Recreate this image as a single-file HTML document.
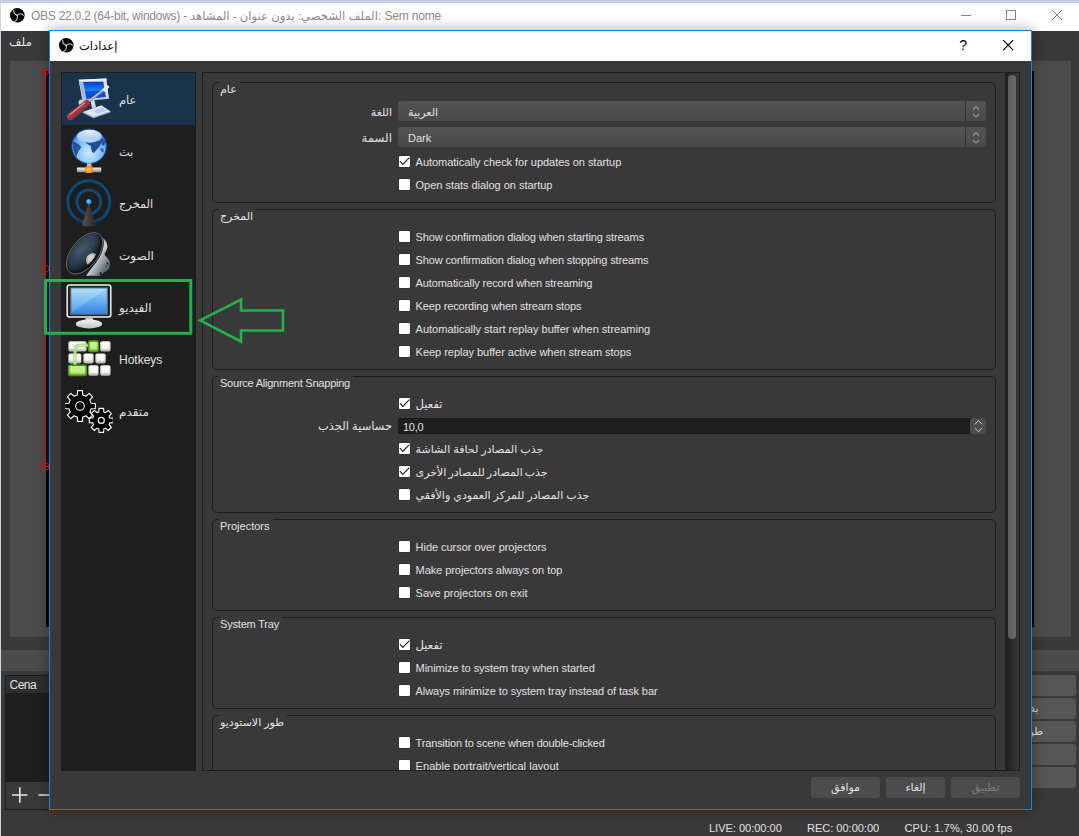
<!DOCTYPE html>
<html lang="ar">
<head>
<meta charset="utf-8">
<title>OBS</title>
<style>
*{box-sizing:border-box;margin:0;padding:0}
html,body{width:1079px;height:836px;overflow:hidden}
body{position:relative;background:#3a393a;font-family:"Liberation Sans","DejaVu Sans",sans-serif;font-size:11px;color:#e1e0e1;line-height:14px}
.a{position:absolute}
.t{position:absolute;white-space:nowrap;line-height:14px;height:14px}
#topstrip{left:0;top:0;width:1079px;height:3px;background:#c4cde1}
#leftstrip{left:0;top:3px;width:1px;height:833px;background:#cdd5e8}
#mtitle{left:1px;top:3px;width:1078px;height:28px;background:#fff}
#mtxt{left:31px;top:7px;font-size:12px;line-height:18px;height:18px;color:#8b8b8b;direction:ltr;white-space:nowrap}
#preview{left:10px;top:61px;width:1061px;height:576px;background:#4c4c4c}
#canvas{left:46px;top:71px;width:988px;height:556px;background:#000}
.dockt{top:650px;height:21px;background:#4b4b4b}
.btn{position:absolute;background:#4c4c4c;border-radius:3px;text-align:center;white-space:nowrap}
#dlg{left:49px;top:30px;width:983px;height:780px;border:1px solid #1883d7;background:#3a393a;box-shadow:0 0 13px 0 rgba(0,0,0,.36)}
#dtitle{left:50px;top:31px;width:981px;height:30px;background:#fff}
#dtxt{left:79px;top:37px;font-size:11.5px;line-height:18px;height:18px;color:#000;white-space:nowrap}
#side{left:61px;top:72px;width:135px;height:699px;background:#1f1e1f}
#sel{left:62px;top:73px;width:133px;height:52px;background:#19334b}
.sl{position:absolute;font-size:12px;left:119px;line-height:16px;height:16px;white-space:nowrap}
#scroll{left:202px;top:72px;width:818px;height:699px;border:1px solid #1f1e1f;overflow:hidden}
.gb{position:absolute;left:9px;width:784px;border:1px solid #1f1e1f;border-radius:5px}
.gt{position:absolute;left:16px;height:12px;background:#3a393a;padding:0 3px 0 1px;line-height:14px;white-space:nowrap}
.cb{position:absolute;left:196.4px;width:10.8px;height:10.8px;margin-top:.4px;background:#fff;border-radius:1px;box-shadow:0 0 0 .4px #2a2a2a}
.cl{position:absolute;left:212.6px;white-space:nowrap;line-height:14px;height:14px}
.fl{position:absolute;right:627px;white-space:nowrap;line-height:14px;height:14px}
.combo{position:absolute;left:195px;width:588px;height:20px;border-radius:3px;background:linear-gradient(#535353,#494949)}
.combo i{position:absolute;right:20px;top:0;width:1px;height:20px;background:#343334}
.combo span{position:absolute;left:10px;top:4px;line-height:14px;white-space:nowrap}
svg{position:absolute;overflow:visible}
#mt1{letter-spacing:-.25px}#mt2{font-size:11.6px}#mt3{letter-spacing:-.2px}
</style>
</head>
<body>
<div class="a" id="topstrip"></div>
<div class="a" id="mtitle"></div>
<svg class="a" style="left:9.6px;top:7.6px" width="14.6" height="14.6" viewBox="0 0 14.6 14.6"><circle cx="7.3" cy="7.3" r="7.3" fill="#000"/><g fill="none" stroke="#d6d6d6" stroke-width="1.05" stroke-linecap="round"><path d="M7.3 7.5C6 6.6 4.2 6 3.9 4.4C3.7 3.6 3.7 3 3.8 2.4"/><path d="M7.3 7.5C8.2 6.4 9.4 5.7 10.6 5.7C12 5.7 12.9 6.4 13.4 7.4"/><path d="M7.3 7.5C7.6 9 7.4 10.6 6.6 11.8C6 12.7 5.2 13.2 4.4 13.4"/></g><circle cx="7.3" cy="7.6" r=".8" fill="#e8e8e8"/></svg>
<div class="a" id="mtxt"><span id="mt1">OBS 22.0.2 (64-bit, windows) - </span><span id="mt2">الملف الشخصي: بدون عنوان - المشاهد</span><span id="mt3">: Sem nome</span></div>
<svg class="a" style="left:955px;top:5px" width="120" height="22" viewBox="955 5 120 22" fill="none" stroke="#858585" stroke-width="1"><path d="M961 15.5h10"/><rect x="1006.5" y="10.5" width="9" height="9"/><path d="M1052 10l10 10M1062 10l-10 10"/></svg>
<div class="t" style="left:9px;top:35px;font-size:12px">ملف</div>
<div class="a" id="preview"></div>
<div class="a" id="canvas"></div>
<div class="a" style="left:46px;top:71px;width:4px;height:395px;background:#010d20"></div>
<svg class="a" style="left:40px;top:60px" width="12" height="420" viewBox="40 60 12 420" fill="none" stroke="#ff0000" stroke-width="1"><path d="M45.5 71v395.5M45.5 70.5h5M45.5 466.5h5"/><circle cx="45.5" cy="71" r="3.6"/><circle cx="45.5" cy="268.6" r="3.6"/><circle cx="45.5" cy="466.5" r="3.6"/></svg>
<div class="a dockt" style="left:1px;width:1078px"></div>
<div class="a" style="left:5px;top:675px;width:200px;height:135px;border:1px solid #1f1e1f;background:#1f1e1f"></div>
<div class="a" style="left:6px;top:676px;width:200px;height:17px;background:#302f30"></div>
<div class="t" style="left:9.5px;top:678px;font-size:12px;letter-spacing:-.5px">Cena</div>
<div class="a" style="left:6px;top:782px;width:200px;height:27px;background:#3a393a"></div>
<svg class="a" style="left:10px;top:785px" width="40" height="20" viewBox="10 785 40 20" fill="none" stroke="#e8e8e8" stroke-width="1.6"><path d="M12 795h15.5M19.8 787.2v15.5M38.5 795h14"/></svg>
<div class="btn" style="left:946px;top:675px;width:130px;height:21px;line-height:20px;background:#565656"></div>
<div class="btn" style="left:946px;top:698px;width:130px;height:21px;line-height:20px;background:#565656">بدء التسجيل</div>
<div class="btn" style="left:946px;top:721px;width:130px;height:21px;line-height:20px;background:#565656">طور الاستوديو</div>
<div class="btn" style="left:946px;top:744px;width:130px;height:21px;line-height:20px;background:#565656"></div>
<div class="btn" style="left:946px;top:767px;width:130px;height:21px;line-height:20px;background:#565656"></div>
<div class="t" style="left:709px;top:821px">LIVE: 00:00:00</div>
<div class="t" style="left:807px;top:821px">REC: 00:00:00</div>
<div class="t" style="left:904.5px;top:821px;letter-spacing:.1px">CPU: 1.7%, 30.00 fps</div>
<div class="a" id="dlg"></div>
<div class="a" id="dtitle"></div>
<svg class="a" style="left:58.6px;top:37.5px" width="14.6" height="14.6" viewBox="0 0 14.6 14.6"><circle cx="7.3" cy="7.3" r="7.3" fill="#000"/><g fill="none" stroke="#d6d6d6" stroke-width="1.05" stroke-linecap="round"><path d="M7.3 7.5C6 6.6 4.2 6 3.9 4.4C3.7 3.6 3.7 3 3.8 2.4"/><path d="M7.3 7.5C8.2 6.4 9.4 5.7 10.6 5.7C12 5.7 12.9 6.4 13.4 7.4"/><path d="M7.3 7.5C7.6 9 7.4 10.6 6.6 11.8C6 12.7 5.2 13.2 4.4 13.4"/></g><circle cx="7.3" cy="7.6" r=".8" fill="#e8e8e8"/></svg>
<div class="a" id="dtxt">إعدادات</div>
<svg class="a" style="left:955px;top:36px" width="70" height="18" viewBox="955 36 70 18" fill="none" stroke="#000" stroke-width="1.2"><path d="M1003.2 40.2l9.9 9.9M1013.1 40.2l-9.9 9.9"/></svg>
<div class="t" style="left:959.3px;top:37px;font-size:14px;color:#000;line-height:16px;height:16px">?</div>
<div class="a" id="side"></div>
<div class="a" id="sel"></div>
<svg class="a" style="left:62px;top:73px" width="60" height="52" viewBox="62 73 60 52">
<defs>
<linearGradient id="g1s" x1="0" y1="0" x2="0" y2="1"><stop offset="0" stop-color="#0b36c8"/><stop offset=".5" stop-color="#1686f0"/><stop offset=".55" stop-color="#0d55dc"/><stop offset="1" stop-color="#0a4ad6"/></linearGradient>
<linearGradient id="g1h" x1="0" y1="0" x2="1" y2="1"><stop offset="0" stop-color="#d98088"/><stop offset=".45" stop-color="#a93640"/><stop offset="1" stop-color="#761a23"/></linearGradient>
</defs>
<circle cx="81.5" cy="102.5" r="3" fill="#c6d2ea"/>
<path d="M78.7 79.8L106.2 78.5L108.8 98.8L82.6 101.2Z" fill="#c3d0ea"/><path d="M78.7 79.8L83.1 82L86.5 99.1L82.6 101.2Z" fill="#a9b9dc"/><path d="M103.3 81.7L106.2 78.5L108.8 98.8L105.9 96.9Z" fill="#dbe3f4"/>
<path d="M78.7 79.8L106.2 78.5L106.6 80.5L80 81.6Z" fill="#edf2fb"/>
<path d="M83.1 82L103.3 81.7L105.9 96.9L86.5 99.1Z" fill="url(#g1s)"/>
<path d="M90.5 100.5L94.5 100L96 107.5L92 108Z" fill="#d5def0"/>
<path d="M82.6 112L101.3 105.3L110.7 111.4L93.6 117.2Z" fill="#dde6f6"/>
<path d="M82.6 112.3L93.6 117.6L110.7 111.8" fill="none" stroke="#9fb0d0" stroke-width="1.2"/>
<path d="M93 110.5L102 107.5L106.5 110.6L97.5 113.8Z" fill="#b9c9ee"/>
<path d="M88 102L104.8 89" stroke="#8f96a2" stroke-width="2.3" fill="none"/><path d="M88 101.6L104.6 88.7" stroke="#dfe3ea" stroke-width=".9" fill="none"/>
<path d="M102 89.4L106.8 85.2C108 84.8 109.4 86.2 109.2 87.6L104.8 92Z" fill="#e6eaf2"/>
<path d="M68.6 113.4L85.3 100.2C86.2 99 88 99.4 88.8 100.6L90.2 103.2C90.8 104.6 90 105.6 88.8 105.8L72.6 119.4C70.6 120.8 68.2 120.4 67.3 118.6C66.4 116.8 67 114.6 68.6 113.4Z" fill="url(#g1h)"/>
<path d="M70 114.6L84.5 103" stroke="#efb0b6" stroke-width="1.2" stroke-linecap="round" fill="none" opacity=".8"/>
</svg>
<svg class="a" style="left:62px;top:125px" width="60" height="52" viewBox="62 125 60 52">
<defs>
<radialGradient id="g2a" cx=".5" cy=".68" r=".62"><stop offset="0" stop-color="#cdeaff"/><stop offset=".5" stop-color="#8fc8fc"/><stop offset=".85" stop-color="#5a9ef2"/><stop offset="1" stop-color="#2464d8"/></radialGradient>
<linearGradient id="g2b" x1="0" y1="0" x2="0" y2="1"><stop offset="0" stop-color="#ffffff" stop-opacity=".95"/><stop offset="1" stop-color="#e6ebfc" stop-opacity=".3"/></linearGradient>
<linearGradient id="g2c" x1="0" y1="0" x2="0" y2="1"><stop offset="0" stop-color="#f4f4f4"/><stop offset="1" stop-color="#8a8a8a"/></linearGradient>
<radialGradient id="g2d"><stop offset="0" stop-color="#ffe070"/><stop offset="1" stop-color="#ff7a00"/></radialGradient>
</defs>
<circle cx="89.1" cy="146.3" r="17.3" fill="url(#g2a)" stroke="#1546b0" stroke-width="1"/>
<path d="M73 141.5C76 142 79.5 144.5 81.5 147C79 150 77 153.5 76.5 157C74 153.5 72.3 148 73 141.5Z" fill="#24549c"/>
<path d="M85 141C88 143.5 94 143 100 139.5C102 141 101.5 144 99.5 146.5C97 149 95 152 93.5 153C91.5 152 91 148 90.5 145.5C88.5 145 86 143.5 85 141Z" fill="#1f4f96"/>
<path d="M100 139.5C102 137.5 104 139 105 141C105.5 144 104 146 102.5 145.5C101.5 143.5 101 141.5 100 139.5Z" fill="#24549c"/>
<path d="M100.5 148C102.5 147.5 104 149.5 103.5 151.5C102 153 100.5 151 100.5 148Z" fill="#2a5eae"/>
<ellipse cx="89.4" cy="136.4" rx="12.4" ry="6.6" fill="url(#g2b)"/>
<path d="M76 156C82 162 96 162 102 156C98 161.5 80 161.5 76 156Z" fill="#d6ecff" opacity=".8"/>
<rect x="86.9" y="163.4" width="4.6" height="3" fill="#c4c4c4"/>
<rect x="76.9" y="167.6" width="24.4" height="4.6" rx=".8" fill="url(#g2c)"/>
<rect x="85.5" y="166" width="7.1" height="7.1" rx="1.2" fill="url(#g2d)"/>
</svg>
<svg class="a" style="left:62px;top:177px" width="60" height="52" viewBox="62 177 60 52">
<defs>
<linearGradient id="g3a" x1="0" y1="0" x2="1" y2="0"><stop offset="0" stop-color="#555"/><stop offset="1" stop-color="#262626"/></linearGradient>
<linearGradient id="g3m" x1="0" y1="0" x2="0" y2="1"><stop offset="0" stop-color="#fff"/><stop offset=".78" stop-color="#fff"/><stop offset="1" stop-color="#000"/></linearGradient>
<mask id="m3"><rect x="62" y="177" width="60" height="52" fill="url(#g3m)"/></mask>
</defs>
<g mask="url(#m3)" fill="none" stroke="#0b4a79" stroke-width="2.9"><circle cx="88.8" cy="201.8" r="21"/><circle cx="88.8" cy="201.8" r="11.9"/></g>
<path d="M88.8 202L96 225.2C93 226.6 85 226.6 82 225.2Z" fill="url(#g3a)"/>
<circle cx="88.8" cy="201.6" r="2.6" fill="#2d9cf6"/><circle cx="88.3" cy="201" r="1" fill="#8fd0ff"/>
</svg>
<svg class="a" style="left:62px;top:229px" width="60" height="52" viewBox="62 229 60 52">
<defs>
<radialGradient id="g4a" cx=".55" cy=".35" r=".75"><stop offset="0" stop-color="#465a6b"/><stop offset=".5" stop-color="#2e3f4f"/><stop offset="1" stop-color="#0b1117"/></radialGradient>
<linearGradient id="g4b" x1="0" y1="0" x2="1" y2="1"><stop offset="0" stop-color="#3a4448"/><stop offset=".5" stop-color="#c9d1d4"/><stop offset=".72" stop-color="#7d8a90"/><stop offset="1" stop-color="#30393d"/></linearGradient>
<clipPath id="c4"><ellipse cx="83.7" cy="252.5" rx="22.2" ry="11.4" transform="rotate(-52.2 83.7 252.5)"/></clipPath>
</defs>
<path d="M103.2 238.2C106.4 240.6 108 245 107.2 248.6L104.4 254.6L109.6 260.8C110.4 264 109.8 267.4 108 270L99.4 275.8L86 275.8L96 262Z" fill="url(#g4b)"/>
<circle cx="107.4" cy="263.6" r="1" fill="#1c1c1c"/><circle cx="100.6" cy="273.4" r="1.2" fill="#1c1c1c"/><circle cx="105.8" cy="266.2" r=".7" fill="#3a3a3a"/><circle cx="103" cy="270" r=".6" fill="#555"/>
<ellipse cx="84.9" cy="253.7" rx="24.7" ry="14.2" transform="rotate(-52.2 84.9 253.7)" fill="#161616"/>
<ellipse cx="84.6" cy="253.4" rx="24" ry="13.4" transform="rotate(-52.2 84.6 253.4)" fill="none" stroke="#a9b2b6" stroke-width=".7" opacity=".75"/>
<ellipse cx="83.7" cy="252.5" rx="22.2" ry="11.4" transform="rotate(-52.2 83.7 252.5)" fill="url(#g4a)"/>
<g clip-path="url(#c4)"><ellipse cx="91.8" cy="259.4" rx="5.6" ry="6.6" transform="rotate(30 91.8 259.4)" fill="#a9a9a9"/><ellipse cx="91" cy="258.4" rx="3.4" ry="4.2" transform="rotate(30 91 258.4)" fill="#cdcdcd"/></g>
</svg>
<svg class="a" style="left:62px;top:283px" width="60" height="48" viewBox="62 283 60 48">
<defs>
<linearGradient id="g5a" x1="0" y1="0" x2="0" y2="1"><stop offset="0" stop-color="#9fdafa"/><stop offset="1" stop-color="#2f84e6"/></linearGradient>
<linearGradient id="g5b" x1="0" y1="0" x2="0" y2="1"><stop offset="0" stop-color="#f4f4f4"/><stop offset="1" stop-color="#c4c4c4"/></linearGradient>
</defs>
<rect x="67.2" y="285" width="43.6" height="32" rx="2.2" fill="#232223" stroke="#f2f2f2" stroke-width="1.5"/>
<rect x="70.8" y="288" width="36.5" height="26.2" fill="url(#g5a)" stroke="#6e6e6e" stroke-width="1"/>
<path d="M71.6 288.7H106.5L71.6 312.5Z" fill="#fff" opacity=".18"/>
<rect x="85.5" y="317.8" width="7.5" height="4.4" fill="#c6c6c6"/>
<ellipse cx="89" cy="323.9" rx="13.2" ry="4.5" fill="url(#g5b)"/>
</svg>
<svg class="a" style="left:62px;top:336px" width="60" height="46" viewBox="62 336 60 46">
<defs>
<linearGradient id="g6w" x1="0" y1="0" x2="0" y2="1"><stop offset="0" stop-color="#f1f1ec"/><stop offset=".7" stop-color="#deded6"/><stop offset="1" stop-color="#b4b4aa"/></linearGradient>
<linearGradient id="g6g" x1="0" y1="0" x2="0" y2="1"><stop offset="0" stop-color="#c4f08a"/><stop offset=".75" stop-color="#9be04e"/><stop offset="1" stop-color="#69b81e"/></linearGradient>
<filter id="f6" x="-5%" y="-5%" width="110%" height="110%"><feGaussianBlur stdDeviation=".35"/></filter>
</defs>
<g filter="url(#f6)">
<g fill="url(#g6w)"><rect x="68.4" y="341.2" width="18.1" height="10.4" rx="1.8"/><rect x="100.2" y="341.2" width="10.3" height="10.4" rx="1.8"/>
<rect x="68.4" y="353.4" width="12.9" height="10" rx="1.8"/><rect x="83.4" y="353.4" width="10.2" height="10" rx="1.8"/><rect x="95.4" y="353.4" width="10.3" height="10" rx="1.8"/>
<rect x="88.4" y="365.3" width="10.2" height="10.4" rx="1.8"/><rect x="100.2" y="365.3" width="10.3" height="10.4" rx="1.8"/></g>
<rect x="70.0" y="342.4" width="14.9" height="6.4" rx="1" fill="#fff" opacity=".75"/><rect x="101.8" y="342.4" width="7.1" height="6.4" rx="1" fill="#fff" opacity=".75"/><rect x="70.0" y="354.6" width="9.7" height="6.0" rx="1" fill="#fff" opacity=".75"/><rect x="85.0" y="354.6" width="7.0" height="6.0" rx="1" fill="#fff" opacity=".75"/><rect x="97.0" y="354.6" width="7.1" height="6.0" rx="1" fill="#fff" opacity=".75"/><rect x="90.0" y="366.5" width="7.0" height="6.4" rx="1" fill="#fff" opacity=".75"/><rect x="101.8" y="366.5" width="7.1" height="6.4" rx="1" fill="#fff" opacity=".75"/><path d="M75 366V350.4C75 347 76.8 345.4 80 345.4H88.4" fill="none" stroke="#a4d672" stroke-width="3.6" opacity=".8"/>
<path d="M75 366V350.4C75 347 76.8 345.4 80 345.4H88.4" fill="none" stroke="#e6f6d2" stroke-width="1" opacity=".7"/>
<rect x="88.6" y="341" width="9.8" height="10.6" rx="2" fill="url(#g6g)" stroke="#4a9410" stroke-width="1.5"/><rect x="90.4" y="342.6" width="6.2" height="6.4" rx="1" fill="#d2f4a4" opacity=".7"/>
<rect x="68.6" y="365.3" width="17.7" height="10.2" rx="2" fill="url(#g6g)" stroke="#4a9410" stroke-width="1.5"/><rect x="70.4" y="366.9" width="14.1" height="5.8" rx="1" fill="#d2f4a4" opacity=".7"/>
</g>
</svg>
<svg class="a" style="left:65px;top:388px;overflow:hidden" width="48" height="48" viewBox="65 388 48 48">
<g fill="#000" stroke="#fff" stroke-width="1.1" stroke-linejoin="round">
<path d="M91.08 403.30L95.40 403.52L95.40 408.48L91.08 408.70A11.40 11.40 0 0 1 89.74 411.92L92.65 415.13L89.13 418.65L85.92 415.74A11.40 11.40 0 0 1 82.70 417.08L82.48 421.40L77.52 421.40L77.30 417.08A11.40 11.40 0 0 1 74.08 415.74L70.87 418.65L67.35 415.13L70.26 411.92A11.40 11.40 0 0 1 68.92 408.70L64.60 408.48L64.60 403.52L68.92 403.30A11.40 11.40 0 0 1 70.26 400.08L67.35 396.87L70.87 393.35L74.08 396.26A11.40 11.40 0 0 1 77.30 394.92L77.52 390.60L82.48 390.60L82.70 394.92A11.40 11.40 0 0 1 85.92 396.26L89.13 393.35L92.65 396.87L89.74 400.08A11.40 11.40 0 0 1 91.08 403.30Z"/><circle cx="80" cy="406" r="4.3"/>
<path d="M109.74 417.90L113.30 418.10L113.30 422.70L109.74 422.90A8.80 8.80 0 0 1 109.03 424.60L111.41 427.26L108.16 430.51L105.50 428.13A8.80 8.80 0 0 1 103.80 428.84L103.60 432.40L99.00 432.40L98.80 428.84A8.80 8.80 0 0 1 97.10 428.13L94.44 430.51L91.19 427.26L93.57 424.60A8.80 8.80 0 0 1 92.86 422.90L89.30 422.70L89.30 418.10L92.86 417.90A8.80 8.80 0 0 1 93.57 416.20L91.19 413.54L94.44 410.29L97.10 412.67A8.80 8.80 0 0 1 98.80 411.96L99.00 408.40L103.60 408.40L103.80 411.96A8.80 8.80 0 0 1 105.50 412.67L108.16 410.29L111.41 413.54L109.03 416.20A8.80 8.80 0 0 1 109.74 417.90Z"/><circle cx="101.3" cy="420.4" r="3"/>
</g>
</svg>

<div class="sl" style="top:92px;font-size:11.4px">عام</div>
<div class="sl" style="top:144px;font-size:11.3px">بث</div>
<div class="sl" style="top:196px;font-size:11.4px">المخرج</div>
<div class="sl" style="top:248px">الصوت</div>
<div class="sl" style="top:300px">الفيديو</div>
<div class="sl" style="top:352px">Hotkeys</div>
<div class="sl" style="top:404px">متقدم</div>
<div class="a" id="scroll">
<div class="gb" style="top:9px;height:121px"></div><div class="gt" style="top:9px">عام</div>
<div class="gb" style="top:136px;height:161px"></div><div class="gt" style="top:136px">المخرج</div>
<div class="gb" style="top:303px;height:137px"></div><div class="gt" style="top:303px;letter-spacing:-.23px">Source Alignment Snapping</div>
<div class="gb" style="top:446px;height:92px"></div><div class="gt" style="top:446px">Projectors</div>
<div class="gb" style="top:544px;height:92px"></div><div class="gt" style="top:544px;letter-spacing:-.19px">System Tray</div>
<div class="gb" style="top:642px;height:92px"></div><div class="gt" style="top:642px">طور الاستوديو</div>
<div class="combo" style="top:28px"><span>العربية</span><i></i><svg style="left:574px;top:4px" width="8" height="13" viewBox="0 0 8 13" fill="none" stroke="#929292" stroke-width="1.15"><path d="M1 4.5l3-3 3 3M1 9l3 3 3-3"/></svg></div><div class="fl" style="top:32px">اللغة</div>
<div class="combo" style="top:54px"><span>Dark</span><i></i><svg style="left:574px;top:4px" width="8" height="13" viewBox="0 0 8 13" fill="none" stroke="#929292" stroke-width="1.15"><path d="M1 4.5l3-3 3 3M1 9l3 3 3-3"/></svg></div><div class="fl" style="top:58px;font-size:11.8px">السمة</div>
<div class="cb" style="top:83px"><svg style="left:-.4px;top:-.4px" width="12" height="12" viewBox="0 0 12 12" fill="none" stroke="#1c1c1c" stroke-width="1.1"><path d="M.9 5.2l2.9 3.2 6.6-6.8"/></svg></div><div class="cl" style="top:82px;letter-spacing:-0.038px">Automatically check for updates on startup</div>
<div class="cb" style="top:106px"></div><div class="cl" style="top:105px;letter-spacing:-0.029px">Open stats dialog on startup</div>
<div class="cb" style="top:158px"></div><div class="cl" style="top:157px;letter-spacing:-0.111px">Show confirmation dialog when starting streams</div>
<div class="cb" style="top:181px"></div><div class="cl" style="top:180px;letter-spacing:-0.137px">Show confirmation dialog when stopping streams</div>
<div class="cb" style="top:204px"></div><div class="cl" style="top:203px;letter-spacing:-0.103px">Automatically record when streaming</div>
<div class="cb" style="top:227px"></div><div class="cl" style="top:226px;letter-spacing:-0.134px">Keep recording when stream stops</div>
<div class="cb" style="top:250px"></div><div class="cl" style="top:249px">Automatically start replay buffer when streaming</div>
<div class="cb" style="top:273px"></div><div class="cl" style="top:272px;letter-spacing:-0.028px">Keep replay buffer active when stream stops</div>
<div class="cb" style="top:325px"><svg style="left:-.4px;top:-.4px" width="12" height="12" viewBox="0 0 12 12" fill="none" stroke="#1c1c1c" stroke-width="1.1"><path d="M.9 5.2l2.9 3.2 6.6-6.8"/></svg></div><div class="cl" style="top:324px;font-size:11.6px">تفعيل</div>
<div class="a" style="left:195px;top:345px;width:588px;height:16px;background:#1f1e1f;border-radius:1px 3px 3px 1px"></div><div class="t" style="left:200px;top:347px;letter-spacing:-.3px">10,0</div><div class="a" style="left:767px;top:345px;width:16px;height:16px;background:#4c4c4c;border-radius:3px"><svg style="left:3.5px;top:2px" width="9" height="12" viewBox="0 0 9 12" fill="none" stroke="#cfcfcf" stroke-width="1"><path d="M.8 4.4l3.7-3.7 3.7 3.7M.8 8L4.5 11.7 8.2 8"/></svg></div><div class="fl" style="top:346px;font-size:11.45px">حساسية الجذب</div>
<div class="cb" style="top:370px"><svg style="left:-.4px;top:-.4px" width="12" height="12" viewBox="0 0 12 12" fill="none" stroke="#1c1c1c" stroke-width="1.1"><path d="M.9 5.2l2.9 3.2 6.6-6.8"/></svg></div><div class="cl" style="top:369px">جذب المصادر لحافة الشاشة</div>
<div class="cb" style="top:393px"><svg style="left:-.4px;top:-.4px" width="12" height="12" viewBox="0 0 12 12" fill="none" stroke="#1c1c1c" stroke-width="1.1"><path d="M.9 5.2l2.9 3.2 6.6-6.8"/></svg></div><div class="cl" style="top:392px;word-spacing:-1.05px">جذب المصادر للمصادر الأخرى</div>
<div class="cb" style="top:416px"></div><div class="cl" style="top:415px">جذب المصادر للمركز العمودي والأفقي</div>
<div class="cb" style="top:468px"></div><div class="cl" style="top:467px;letter-spacing:-0.041px">Hide cursor over projectors</div>
<div class="cb" style="top:491px"></div><div class="cl" style="top:490px;letter-spacing:-0.066px">Make projectors always on top</div>
<div class="cb" style="top:514px"></div><div class="cl" style="top:513px">Save projectors on exit</div>
<div class="cb" style="top:566px"><svg style="left:-.4px;top:-.4px" width="12" height="12" viewBox="0 0 12 12" fill="none" stroke="#1c1c1c" stroke-width="1.1"><path d="M.9 5.2l2.9 3.2 6.6-6.8"/></svg></div><div class="cl" style="top:565px;font-size:11.6px">تفعيل</div>
<div class="cb" style="top:589px"></div><div class="cl" style="top:588px;letter-spacing:-0.050px">Minimize to system tray when started</div>
<div class="cb" style="top:612px"></div><div class="cl" style="top:611px;letter-spacing:-0.076px">Always minimize to system tray instead of task bar</div>
<div class="cb" style="top:664px"></div><div class="cl" style="top:663px;letter-spacing:-0.156px">Transition to scene when double-clicked</div>
<div class="cb" style="top:687px"></div><div class="cl" style="top:686px;letter-spacing:0.042px">Enable portrait/vertical layout</div>
<div class="a" style="left:802px;top:0;width:14px;height:697px;background:linear-gradient(90deg,#1f1e1f,#323132 75%,#3a393a)"></div><div class="a" style="left:805px;top:2px;width:8px;height:564px;border-radius:4px;background:linear-gradient(90deg,#5a5a5a,#6b6b6b)"></div>
</div>
<div class="btn" style="left:811px;top:777px;width:69px;height:21px;line-height:20px">موافق</div>
<div class="btn" style="left:886px;top:777px;width:59px;height:21px;line-height:20px">إلغاء</div>
<div class="btn" style="left:951px;top:777px;width:69px;height:21px;line-height:20px;color:#7d7d7d">تطبيق</div>
<svg class="a" style="left:40px;top:275px" width="250" height="70" viewBox="40 275 250 70" fill="none" stroke="#22b14c"><rect x="45.5" y="280.5" width="145.3" height="52.8" stroke-width="3"/><path d="M200 320.3L241 299.5V310.5H283V330.5H241V341.5Z" stroke-width="2.6" stroke-linejoin="miter"/></svg>
<div class="a" id="leftstrip"></div>
</body>
</html>
